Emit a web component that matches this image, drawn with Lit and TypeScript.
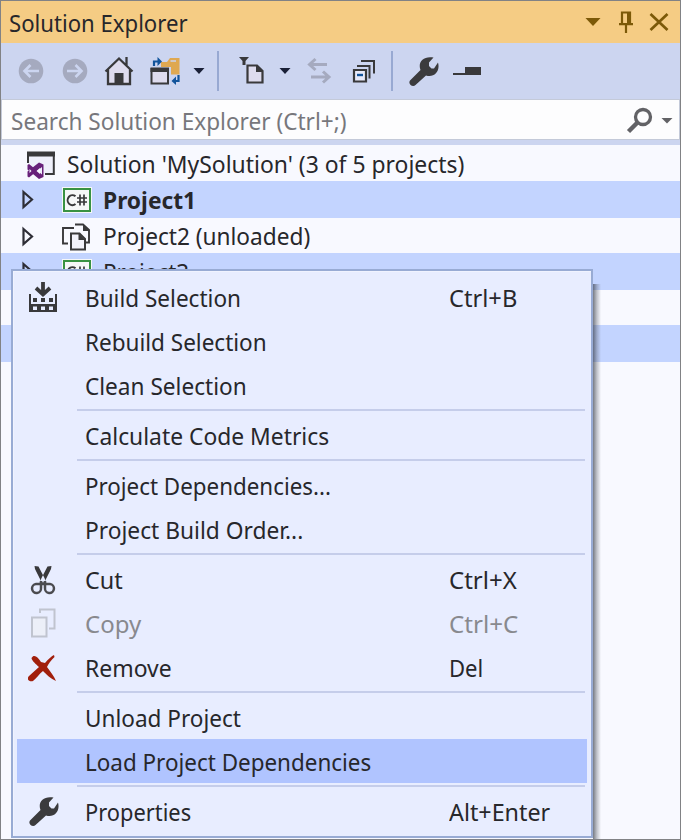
import { LitElement, html, svg, css, nothing, TemplateResult, SVGTemplateResult } from "lit";
import { customElement, property } from "lit/decorators.js";
import { classMap } from "lit/directives/class-map.js";

/** One line of text condensed horizontally to a given width. */
@customElement("fit-text")
class FitText extends LitElement {
  static styles = css`
    :host { display: block; white-space: pre; flex: none; }
    .ink { display: inline-block; transform-origin: 0 50%; }
  `;
  @property({ type: Number }) width = 0;
  @property() text = "";

  render() {
    return html`<span class="ink">${this.text}</span>`;
  }

  updated() {
    const ink = this.renderRoot.querySelector(".ink") as HTMLElement;
    const natural = ink.offsetWidth;
    this.style.width = this.width + "px";
    if (natural) ink.style.transform = `scaleX(${this.width / natural})`;
  }
}

const fit = (text: string, width: number) => html`<fit-text .text=${text} .width=${width}></fit-text>`;

const icon = (x: number, y: number, w: number, h: number, body: SVGTemplateResult) =>
  html`<svg width=${w} height=${h} viewBox="${x} ${y} ${w} ${h}">${body}</svg>`;

const wrench = svg`<path fill="#3b3b3d" d="M410 80.500 420.500 70C417.500 62 423.500 55.500 433.500 57.500L429 62.500V66L431.500 68.500H434L438 62.500C440.500 71.500 434 78 426 75.500L415.500 85C413 87.500 407.500 84.500 410 80.500Z"/>`;

const icons = {
  back: icon(18, 56, 26, 30, svg`<circle cx="31" cy="71" r="12.300" fill="#a5aabf"/><path d="M39 71H25M30.500 65 24.500 71 30.500 77" fill="none" stroke="#ccd5f0" stroke-width="2.600"/>`),
  forward: icon(62, 56, 26, 30, svg`<circle cx="75" cy="71" r="12.300" fill="#a5aabf"/><path d="M67 71H81M75.500 65 81.500 71 75.500 77" fill="none" stroke="#ccd5f0" stroke-width="2.600"/>`),
  home: icon(104, 56, 30, 30, svg`<path d="M108 70 119 59 130 70V84H108Z" fill="#dedcee"/><path d="M105.500 71.500 119 58.500 132.500 71.500M108 69V84H130V69M126.500 65V57" fill="none" stroke="#39393b" stroke-width="2.300"/><path d="M114.500 73H123.500V84H114.500Z" fill="#39393b"/>`),
  sync: icon(150, 55, 32, 30, svg`<path d="M161 61H167L170 57H179.500V73.500H171V66H161Z" fill="#dfa851"/><path d="M170.500 60H176" stroke="#ccd5f0" stroke-width="1.500"/><path d="M151.500 68H168V82.500H151.500Z" fill="#dedcee" stroke="#39393b" stroke-width="2"/><path d="M150.500 66.500H169V71H150.500Z" fill="#39393b"/><path d="M154 65V60.500H160M178.500 74V80H173" fill="none" stroke="#12549b" stroke-width="2.200"/><path d="M157.500 56 162 60.500 157.500 65ZM176 75.500 171.500 80 176 84Z" fill="#12549b"/>`),
  drop: icon(193, 68, 12, 8, svg`<path d="M193.500 69H204.500L199 75Z" fill="#1a2037"/>`),
  filter: icon(238, 56, 28, 30, svg`<path d="M239 57H249L245.500 61V65H242.500V61Z" fill="#39393b"/><path d="M247.500 65.500H257L262.500 71V82.500H247.500Z" fill="#dedcee" stroke="#39393b" stroke-width="2.200"/><path d="M256 65V72H263Z" fill="#39393b"/>`),
  swap: icon(306, 57, 26, 28, svg`<path d="M327 64.500H310M315.500 59 309.500 64.500 315.500 70M311 77H329M323 71.500 329 77 323 82.500" fill="none" stroke="#a5aabf" stroke-width="3"/>`),
  collapse: icon(352, 57, 26, 26, svg`<path d="M361 60H374V72.500M357 65H369.500V77.500" fill="none" stroke="#39393b" stroke-width="2"/><path d="M354 69H366V80.500H354Z" fill="#e8eafa" stroke="#39393b" stroke-width="2.200"/><path d="M357 74H363" stroke="#12549b" stroke-width="2.400"/>`),
  wrench: icon(408, 56, 31, 31, wrench),
  preview: icon(452, 66, 30, 10, svg`<path d="M465 67H481V75H465ZM453 73H465V75H453Z" fill="#39393b"/>`),
  menuDown: icon(585, 16, 16, 9, svg`<path d="M585.500 17H600.500L593 25Z" fill="#7c5908"/>`),
  pin: icon(617, 10, 17, 24, svg`<path d="M622 24V12.500H630V24M619 24.200H633M626 24V33" fill="none" stroke="#7c5908" stroke-width="2.200"/><path d="M627 12H631V24H627Z" fill="#7c5908"/>`),
  close: icon(649, 11, 20, 20, svg`<path d="M650.500 13 667.500 29M667.500 13 650.500 29" stroke="#7c5908" stroke-width="2.700"/>`),
  search: icon(624, 105, 28, 29, svg`<circle cx="642" cy="116" r="7.500" fill="none" stroke="#626266" stroke-width="3.300"/><path d="M636.500 121.500 627.500 130.500" stroke="#626266" stroke-width="4.500"/>`),
  searchDrop: icon(661, 116, 12, 7, svg`<path d="M661.500 117H672.500L667 122.500Z" fill="#626266"/>`),
  solution: icon(26, 150, 30, 30, svg`<path d="M28 152H54V174H28Z" fill="#eff0fb"/><path d="M28 163V153H53.800V174H45" fill="none" stroke="#39393b" stroke-width="2"/><path d="M27 151.500H55V156.500H27Z" fill="#39393b"/><path d="M39 162.500 43.500 164.500V177L39 179 27.500 169.500V165L29 164 42 174.500V167L29 177.500 27.500 176.500V171.500Z" fill="#68217a"/><path d="M29.500 169 31.500 171 29.500 173ZM40 168V174L36.500 171Z" fill="#f8f9ff"/>`),
  expander: icon(21, 190, 14, 22, svg`<path d="M23.500 193 32 200.500 23.500 208Z" fill="none" stroke="#2e2e36" stroke-width="2.200"/>`),
  csharp: icon(61, 187, 32, 28, svg`<path d="M62 188H92V214H62Z" fill="#f6f7f8"/><path d="M64 190H90V212H64Z" fill="#f6f7f8" stroke="#399243" stroke-width="2"/><path d="M75.500 197.300A4.800 5 0 1 0 75.500 205" fill="none" stroke="#39393b" stroke-width="2"/><path d="M80 195.500V206.500M84 195.500V206.500M77 199H87M77 203H87" stroke="#39393b" stroke-width="1.700"/>`),
  unloaded: icon(62, 222, 31, 30, svg`<path d="M69 243.500H64V228H75M76 224.500H84L90 230V242.500H87" fill="none" stroke="#39393b" stroke-width="1.900"/><path d="M84 224V231H91Z" fill="#39393b"/><path d="M72 233.500H80.500L86 239V249.500H72Z" fill="#f2f2fb" stroke="#39393b" stroke-width="2"/><path d="M79.500 233V240H86Z" fill="#39393b"/>`),
  build: icon(28, 280, 30, 32, svg`<path d="M43 281V292M36 287 43 293.500 50 287" fill="none" stroke="#39393b" stroke-width="3.800"/><path d="M30 293V310H56V293" fill="none" stroke="#39393b" stroke-width="2"/><path d="M33 297H37V301H33ZM41 297H45V301H41ZM49 297H53V301H49ZM29 303H57V311H29Z" fill="#39393b"/><path d="M33 305.500H37V309H33ZM41 305.500H45V309H41ZM49 305.500H53V309H49Z" fill="#e8edff"/>`),
  cut: icon(28, 563, 30, 31, svg`<path d="M34.500 565 38.500 565.500 44.500 577 47 584 41 580 35 568ZM51.500 565 47.500 565.500 41.500 577 39 584 45 580 51 568Z" fill="#39393b"/><path d="M41 580V587A4.500 4.500 0 1 1 36 583H50A4.500 4.500 0 1 1 45 587V580" fill="none" stroke="#4b4b4f" stroke-width="2.500"/>`),
  copy: icon(28, 608, 30, 31, svg`<path d="M40 613V609.500H54.500V628.500H49" fill="none" stroke="#c0c4cf" stroke-width="2"/><path d="M32 617.500H46.500V636.500H32Z" fill="#eceff8" stroke="#c0c4cf" stroke-width="2"/>`),
  remove: icon(28, 652, 30, 31, svg`<path d="M31.500 658C34 653.500 38 657 41 662L45 663C48 659 52 656 54 655L54.500 657C51 660 48.500 664 47 667C50 671 54 676 56 681C51 679 46 674 43 671C39 674 36 679 33 681C29 682 26 679 29 676L39 667C36 664 32 661 31.500 658Z" fill="#a11f0c"/>`),
};

interface MenuItem { label: string; width: number; key?: string; keyWidth?: number; icon?: TemplateResult; state?: "disabled" | "active"; }

const menu: MenuItem[][] = [
  [
    { label: "Build Selection", width: 156, key: "Ctrl+B", keyWidth: 68, icon: icons.build },
    { label: "Rebuild Selection", width: 182 },
    { label: "Clean Selection", width: 162 },
  ],
  [{ label: "Calculate Code Metrics", width: 244.5 }],
  [
    { label: "Project Dependencies...", width: 246 },
    { label: "Project Build Order...", width: 218 },
  ],
  [
    { label: "Cut", width: 38, key: "Ctrl+X", keyWidth: 68, icon: icons.cut },
    { label: "Copy", width: 56, key: "Ctrl+C", keyWidth: 69.5, icon: icons.copy, state: "disabled" },
    { label: "Remove", width: 87, key: "Del", keyWidth: 34, icon: icons.remove },
  ],
  [
    { label: "Unload Project", width: 156 },
    { label: "Load Project Dependencies", width: 286, state: "active" },
  ],
  [{ label: "Properties", width: 106.5, key: "Alt+Enter", keyWidth: 101, icon: icons.wrench }],
];

@customElement("app-root")
class AppRoot extends LitElement {
  static styles = css`
    :host {
      display: flex; flex-direction: column; position: relative; overflow: hidden;
      box-sizing: border-box; width: 681px; height: 840px;
      border: 1px solid #818285; background: #f8f9ff;
      font: 24px/36px "Noto Sans", "Open Sans", sans-serif; color: #27272b;
    }
    svg { display: block; flex: none; }
    .title { display: flex; align-items: center; height: 42px; box-sizing: border-box; padding: 0 11px 0 8px; background: #f5cc84; }
    .title fit-text { padding-top: 1px; }
    .title .actions { display: flex; align-items: center; gap: 15.500px; margin-left: auto; padding-bottom: 1px; }
    .tools { display: flex; align-items: center; height: 56px; background: #ccd5f0; padding-left: 17px; box-sizing: border-box; }
    .forward { margin-left: 18px; }
    .home { margin-left: 16px; }
    .sync { margin-left: 16px; }
    .drop { margin-left: 11px; }
    .rule { width: 2px; height: 40px; background: #98a9d2; margin-left: 12px; }
    .filter { margin-left: 19px; }
    .drop2 { margin-left: 13px; }
    .swap { margin-left: 15px; }
    .collapse { margin-left: 20px; }
    .rule2 { margin-left: 13px; }
    .wrench { margin-left: 15px; }
    .preview { margin-left: 13px; }
    .search { display: flex; align-items: center; height: 41px; box-sizing: border-box; border: 1.500px solid #c4cad9; background: #fdfdfe; padding: 2px 6px 0 9px; color: #77777c; }
    .search .glass { margin-left: auto; }
    .search .more { margin-left: 8px; }
    .tree { flex: 1; border-top: 5px solid #ccd5f0; }
    .row { display: flex; align-items: center; height: 36px; box-sizing: border-box; }
    .row fit-text { padding-top: 1px; }
    .root { padding-left: 25px; }
    .root svg { margin-top: 3px; }
    .root fit-text { margin-left: 11px; }
    .project { padding-left: 20px; }
    .project:not(.selected) svg { margin-top: 3px; }
    .project .kind { margin-left: 26px; width: 32px; }
    .project fit-text { margin-left: 10px; }
    .selected { background: #c3d4ff; height: 37px; margin-bottom: -1px; position: relative; }
    .bold { font-weight: 700; }
    .menu {
      position: absolute; left: 10px; top: 268px; width: 582px; height: 569px; box-sizing: border-box;
      border: 2px solid #98abd4; background: #e8edff; padding: 4px 4px 0 4px;
      box-shadow: inset 1px 1px #f0f3ff;
    }
    .shadow { position: absolute; left: 592px; top: 283px; bottom: 0; width: 8px; background: linear-gradient(90deg, rgba(50,55,65,.65), rgba(80,85,95,.32) 50%, transparent); }
    .item { display: flex; align-items: center; height: 44px; color: #27272b; }
    .item .slot { width: 46px; display: flex; justify-content: center; margin-left: 3px; }
    .item .label { width: 364px; margin-left: 19px; padding-top: 2px; }
    .item .key { padding-top: 2px; }
    .active { background: #b0c4ff; }
    .disabled { color: #88898e; }
    .line { height: 2px; margin: 2px 2px 2px 60px; background: #c5cdea; }
  `;

  project(name: string, width: number, selected: boolean, bold = false, kind = icons.csharp) {
    return html`<div class=${classMap({ row: true, project: true, selected, bold })}>
      ${icons.expander}<div class="kind">${kind}</div>${fit(name, width)}
    </div>`;
  }

  item(m: MenuItem) {
    return html`<div class=${classMap({ item: true, active: m.state === "active", disabled: m.state === "disabled" })}>
      <div class="slot">${m.icon ?? nothing}</div>
      <div class="label">${fit(m.label, m.width)}</div>
      ${m.key ? html`<div class="key">${fit(m.key, m.keyWidth ?? 0)}</div>` : nothing}
    </div>`;
  }

  render() {
    return html`
      <div class="title">
        ${fit("Solution Explorer", 179)}
        <div class="actions">${icons.menuDown}${icons.pin}${icons.close}</div>
      </div>
      <div class="tools">
        <div>${icons.back}</div>
        <div class="forward">${icons.forward}</div>
        <div class="home">${icons.home}</div>
        <div class="sync">${icons.sync}</div>
        <div class="drop">${icons.drop}</div>
        <div class="rule"></div>
        <div class="filter">${icons.filter}</div>
        <div class="drop2">${icons.drop}</div>
        <div class="swap">${icons.swap}</div>
        <div class="collapse">${icons.collapse}</div>
        <div class="rule rule2"></div>
        <div class="wrench">${icons.wrench}</div>
        <div class="preview">${icons.preview}</div>
      </div>
      <div class="search">
        ${fit("Search Solution Explorer (Ctrl+;)", 336)}
        <div class="glass">${icons.search}</div>
        <div class="more">${icons.searchDrop}</div>
      </div>
      <div class="tree">
        <div class="row root">${icons.solution}${fit("Solution 'MySolution' (3 of 5 projects)", 397)}</div>
        ${this.project("Project1", 93, true, true)}
        ${this.project("Project2 (unloaded)", 207.5, false, false, icons.unloaded)}
        ${this.project("Project3", 86, true)}
        <div class="row"></div>
        <div class="row selected"></div>
      </div>
      <div class="shadow"></div>
      <div class="menu">
        ${menu.map((group, i) => html`${i ? html`<div class="line"></div>` : nothing}${group.map((m) => this.item(m))}`)}
      </div>
    `;
  }
}
